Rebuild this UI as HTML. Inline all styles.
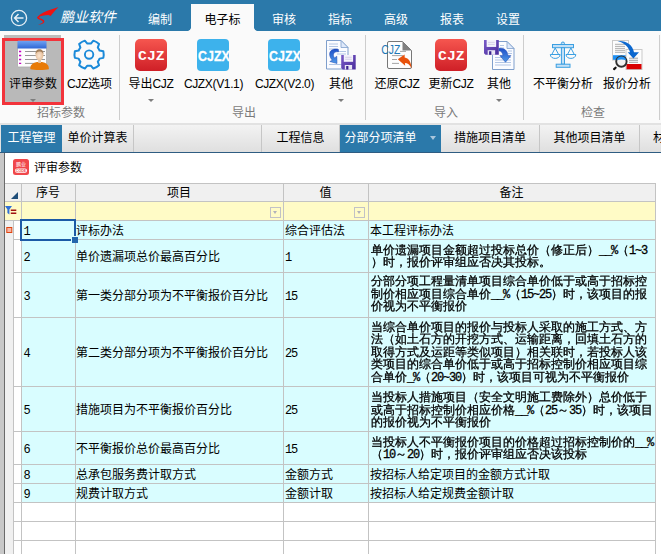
<!DOCTYPE html>
<html lang="zh-CN">
<head>
<meta charset="utf-8">
<title>评审参数</title>
<style>
html,body{margin:0;padding:0;}
body{width:661px;height:554px;overflow:hidden;position:relative;background:#fff;
 font-family:"Liberation Sans","Noto Sans CJK SC",sans-serif;font-size:12px;color:#000;}
.abs{position:absolute;}
#title{left:0;top:0;width:661px;height:31px;background:#2b79aa;}
.mt{position:absolute;top:10.5px;height:18px;line-height:18px;color:#fff;font-size:12px;white-space:nowrap;transform:translateX(-50%);}
#acttab{left:191px;top:4px;width:63px;height:28px;background:#fafafa;}
#acttab span{position:absolute;left:0;width:63px;top:6.5px;height:18px;line-height:18px;text-align:center;color:#000;font-size:12px;}
#brand{left:60px;top:7px;height:20px;line-height:20px;color:#fff;font-size:14px;font-style:italic;white-space:nowrap;letter-spacing:0px;}
#ribbon{left:0;top:31px;width:661px;height:92px;background:#fafafa;}
.sep{position:absolute;top:35px;width:1px;height:85px;background:#cdcdcd;}
.bl{position:absolute;top:74.5px;height:18px;line-height:18px;font-size:12px;white-space:nowrap;transform:translateX(-50%);color:#000;}
.la{letter-spacing:-0.35px;}
.gl{position:absolute;top:104px;height:18px;line-height:18px;font-size:12px;white-space:nowrap;transform:translateX(-50%);color:#7a7a7a;}
.dd{position:absolute;top:98.8px;width:0;height:0;border-left:3.2px solid transparent;border-right:3.2px solid transparent;border-top:3.6px solid #7d7d7d;transform:translateX(-50%);}
.ic{position:absolute;top:39px;width:32px;height:32px;}
#tabbar{left:0;top:123px;width:661px;height:30px;background:#e2e2e2;}
.tab{position:absolute;top:125px;height:27px;line-height:27px;font-size:12px;text-align:center;white-space:nowrap;color:#000;background:linear-gradient(#f3f3f3,#dfdfdf);box-sizing:border-box;border-right:1px solid #c6c6c6;}
.tab.on{background:#2b79aa;color:#fff;border-right:none;}
#panel{left:5px;top:153px;width:656px;height:401px;background:#fff;}
.cell{position:absolute;box-sizing:border-box;white-space:nowrap;overflow:hidden;}
.hd{height:18px;line-height:17px;text-align:center;font-size:12px;white-space:nowrap;}
.c{height:16px;line-height:16px;font-size:12px;white-space:nowrap;}
.ss{font-family:"Liberation Sans","WenQuanYi Zen Hei",sans-serif;font-size:12px;line-height:12.4px;white-space:nowrap;-webkit-text-stroke:0.3px #000;}
.hw{font-family:"Liberation Mono","IPAGothic",monospace;font-size:12px;letter-spacing:-1.2px;}
.ln{height:12.4px;line-height:12.4px;white-space:nowrap;}
.ln span{line-height:0;}
</style>
</head>
<body>
<div id="title" class="abs"></div>
<svg class="abs" style="left:9px;top:8px" width="20" height="20" viewBox="0 0 20 20"><circle cx="10" cy="10" r="7.6" fill="none" stroke="#e8f0f6" stroke-width="1.3"/><path d="M14.5 10H6M9.5 6L5.6 10l3.9 4" fill="none" stroke="#e8f0f6" stroke-width="1.5"/></svg>
<svg class="abs" style="left:30px;top:0" width="34" height="31" viewBox="30 0 34 31"><path d="M58.500 7C54 8.500 48 10.300 44 12.300C41 13.800 38 15.800 37 17.600C37.200 19 39.500 19.800 41.500 20.400C43 20.900 43.300 21.600 42.500 22.500C41.500 23.500 39.500 24.200 37.800 24.500C40.500 24.600 43.300 23.600 44.200 22.200C45 20.800 43.500 19.600 41.500 18.800C40 18.300 38.800 17.800 39.300 17C40.500 15.800 44 15.200 48.500 14.900L50.700 15.900C52.500 13.800 55 10.500 58.500 7Z" fill="#ee1212"/></svg>
<div id="brand" class="abs">鹏业软件</div>
<div class="mt" style="left:160px">编制</div>
<div id="acttab" class="abs"><span>电子标</span></div>
<div class="mt" style="left:284px">审核</div>
<div class="mt" style="left:340px">指标</div>
<div class="mt" style="left:396px">高级</div>
<div class="mt" style="left:452px">报表</div>
<div class="mt" style="left:508px">设置</div>

<div id="ribbon" class="abs"></div>
<div class="abs" style="left:188px;top:28px;width:3px;height:3px;background:radial-gradient(circle at 0 0,#2b79aa 2.4px,#fafafa 3px)"></div>
<div class="abs" style="left:254px;top:28px;width:3px;height:3px;background:radial-gradient(circle at 100% 0,#2b79aa 2.4px,#fafafa 3px)"></div>
<div class="abs" style="left:4px;top:35px;width:57px;height:69px;background:#bcbcbc;"></div>
<div class="abs" style="left:2px;top:38px;width:62px;height:67px;background:#b9b9b9;border:3px solid #f2333b;box-sizing:border-box;"></div>
<div class="sep" style="left:119px"></div>
<div class="sep" style="left:365px"></div>
<div class="sep" style="left:523px"></div>
<div class="sep" style="left:659px"></div>

<div class="bl" style="left:33px">评审参数</div>
<div class="bl" style="left:89.5px"><span class="la">CJZ</span>选项</div>
<div class="bl" style="left:151px">导出<span class="la">CJZ</span></div>
<div class="bl" style="left:213.5px"><span class="la">CJZX(V1.1)</span></div>
<div class="bl" style="left:284.5px"><span class="la">CJZX(V2.0)</span></div>
<div class="bl" style="left:341px">其他</div>
<div class="bl" style="left:397px">还原<span class="la">CJZ</span></div>
<div class="bl" style="left:451px">更新<span class="la">CJZ</span></div>
<div class="bl" style="left:499px">其他</div>
<div class="bl" style="left:563px">不平衡分析</div>
<div class="bl" style="left:627px">报价分析</div>
<div class="dd" style="left:33px"></div>
<div class="dd" style="left:151px"></div>
<div class="dd" style="left:341px"></div>
<div class="dd" style="left:499px"></div>
<div class="gl" style="left:61px">招标参数</div>
<div class="gl" style="left:244px">导出</div>
<div class="gl" style="left:446px">导入</div>
<div class="gl" style="left:593px">检查</div>

<!-- ICONS -->
<div id="icons">
<svg class="abs" style="left:0;top:0" width="661" height="125" viewBox="0 0 661 125">
<defs><linearGradient id="gr" x1="0" y1="0" x2="0" y2="1"><stop offset="0" stop-color="#f6564f"/><stop offset="1" stop-color="#cf1f27"/></linearGradient><linearGradient id="gb" x1="0" y1="0" x2="0" y2="1"><stop offset="0" stop-color="#6ea2f2"/><stop offset="1" stop-color="#2f66d6"/></linearGradient><linearGradient id="gp" x1="0" y1="0" x2="1" y2="1"><stop offset="0" stop-color="#7a5cc8"/><stop offset="1" stop-color="#4a2c9c"/></linearGradient><linearGradient id="ga" x1="0" y1="0" x2="0" y2="1"><stop offset="0" stop-color="#1f4fc8"/><stop offset="1" stop-color="#4f9ae8"/></linearGradient><radialGradient id="gs" cx="0.45" cy="0.55" r="0.6"><stop offset="0" stop-color="#fbe6d2"/><stop offset="1" stop-color="#e2b890"/></radialGradient></defs>
<g><rect x="17.500" y="41" width="29" height="26" rx="1" fill="#fdfdfd" stroke="#a9a9a9" stroke-width="0.8"/><rect x="17.500" y="41" width="29" height="7.500" fill="url(#gb)"/><g stroke="#c400c4" stroke-width="1.300"><path d="M19 51.500h2.200M19 55.500h2.200M19 59.500h2.200M19 63.400h2.200"/></g><g stroke="#8a8a8a" stroke-width="0.900"><path d="M25 51.500h20M25 55.500h20M25 59.500h20M25 63.400h20"/></g><path d="M30.400 69.200c-.5-3.500 1.600-6.300 6.600-7.200h5c5 .9 7.200 3.700 6.800 7.200-3 1-15.400 1-18.400 0z" fill="#e87a06"/><rect x="38.200" y="58.500" width="2.800" height="4.500" fill="#e6c3a0"/><ellipse cx="39.500" cy="55.200" rx="3.900" ry="5.300" fill="url(#gs)"/><path d="M35.600 54.500c-.3-3.600 1.500-5.300 3.900-5.300s4.300 1.700 3.900 5.300c-.7-2-1.800-3-3.900-3s-3.200 1-3.900 3z" fill="#a5825e"/></g>
<path d="M99.56 50.59L103.33 51.32A14.6 14.6 0 0 1 103.33 57.88L99.56 58.61A11.2 11.2 0 0 1 97.80 61.65L99.06 65.28A14.6 14.6 0 0 1 93.37 68.56L90.85 65.66A11.2 11.2 0 0 1 87.35 65.66L84.83 68.56A14.6 14.6 0 0 1 79.14 65.28L80.40 61.65A11.2 11.2 0 0 1 78.64 58.61L74.87 57.88A14.6 14.6 0 0 1 74.87 51.32L78.64 50.59A11.2 11.2 0 0 1 80.40 47.55L79.14 43.92A14.6 14.6 0 0 1 84.83 40.64L87.35 43.54A11.2 11.2 0 0 1 90.85 43.54L93.37 40.64A14.6 14.6 0 0 1 99.06 43.92L97.80 47.55A11.2 11.2 0 0 1 99.56 50.59Z" fill="none" stroke="#1b8ad9" stroke-width="2" stroke-linejoin="round"/>
<circle cx="89.100" cy="54.600" r="4.200" fill="none" stroke="#1b8ad9" stroke-width="1.900"/>
<rect x="135" y="39" width="32" height="32" rx="5" fill="url(#gr)"/>
<text x="151.3" y="60.200" text-anchor="middle" font-family="Liberation Mono,monospace" font-weight="bold" font-size="12.800" textLength="26.500" lengthAdjust="spacingAndGlyphs" fill="#fff">CJZ</text>
<rect x="435" y="39" width="32" height="32" rx="5" fill="url(#gr)"/>
<text x="451.3" y="60.200" text-anchor="middle" font-family="Liberation Mono,monospace" font-weight="bold" font-size="12.800" textLength="26.500" lengthAdjust="spacingAndGlyphs" fill="#fff">CJZ</text>
<rect x="197" y="39" width="32" height="32" rx="4" fill="#3db2ec"/>
<text x="198" y="60.800" font-family="Liberation Sans,sans-serif" font-weight="bold" font-size="15.200" stroke="#fff" stroke-width="0.300" textLength="31.800" lengthAdjust="spacingAndGlyphs" fill="#fff">CJZX</text>
<rect x="268" y="39" width="32" height="32" rx="4" fill="#3db2ec"/>
<text x="269" y="60.800" font-family="Liberation Sans,sans-serif" font-weight="bold" font-size="15.200" stroke="#fff" stroke-width="0.300" textLength="31.800" lengthAdjust="spacingAndGlyphs" fill="#fff">CJZX</text>
<path d="M326.5 40.5h14.5l7 7v21.5h-21.5z" fill="#fbfcff" stroke="#7f9fcc" stroke-width="1"/><path d="M341.0 40.5v7h7z" fill="#dfe9fa" stroke="#7f9fcc" stroke-width="0.800" stroke-linejoin="round"/><path d="M329 44H338M329 46.5H338M329 49H338M337 51.5H346M337 54H346M329 64.5H346" stroke="#a9c0e2" stroke-width="0.900"/>
<path d="M338.500 49.500c-5-1.500-9.500 1-8.800 5.500.3 2.200 1.300 3.800 2.600 5.200l-2.500 1.300 7.200 2-.2-7.300-2.200 1.700c-1.300-1.600-1.600-3.300-.6-4.700.9-1.300 2.500-1.700 4.500-1.400z" fill="url(#ga)" stroke="#1c44b0" stroke-width="0.500"/>
<g transform="translate(341.2 55) scale(1.0)"><path d="M0 0h14.500v14.500h-13l-1.500-1.500z" fill="url(#gp)"/><rect x="2.600" y="0" width="9.300" height="6.800" fill="#f4f2fb"/><path d="M4 2.300h6.500M4 4.300h6.500" stroke="#c9c3e2" stroke-width="0.700"/><rect x="3.600" y="10" width="7.300" height="4.500" fill="#e9e6f5"/><rect x="5" y="11" width="2.200" height="3.500" fill="#3a2390"/></g>
<path d="M389 41.500h13.500l9 9v16.500a1.500 1.500 0 0 1-1.500 1.500h-21a1.500 1.500 0 0 1-1.500-1.500v-24a1.500 1.500 0 0 1 1.500-1.500z" fill="#fdfdfd" stroke="#777" stroke-width="1"/>
<path d="M402.500 41.500l9 9h-9z" fill="#808080"/>
<path d="M400 51.400h6M392 55.600h11M392 59.500h5M392 63.400h7" stroke="#9b9b9b" stroke-width="0.900"/>
<text x="381.300" y="54" font-family="Liberation Sans,sans-serif" font-size="12" textLength="19" lengthAdjust="spacingAndGlyphs" fill="#1f78b6">CJZ</text>
<path d="M397.800 59.200l6.800-4.600.1 2.800c4 .6 6.600 4.600 6.900 11.200-1.800-3.800-4-5.600-6.700-5.600l.3 2.700z" fill="#e8520c"/>
<path d="M492.5 41.5h14.5l7 7v21h-21.5z" fill="#fbfcff" stroke="#7f9fcc" stroke-width="1"/><path d="M507.0 41.5v7h7z" fill="#dfe9fa" stroke="#7f9fcc" stroke-width="0.800" stroke-linejoin="round"/><path d="M500 45.5H504M500 48H504M508 51H512M508 53.5H512M495 57.5H511M495 60H511M495 62.5H511M495 65H511" stroke="#a9c0e2" stroke-width="0.900"/>
<g transform="translate(484 40) scale(1.0206896551724138)"><path d="M0 0h14.500v14.500h-13l-1.500-1.500z" fill="url(#gp)"/><rect x="2.600" y="0" width="9.300" height="6.800" fill="#f4f2fb"/><path d="M4 2.300h6.500M4 4.300h6.500" stroke="#c9c3e2" stroke-width="0.700"/><rect x="3.600" y="10" width="7.300" height="4.500" fill="#e9e6f5"/><rect x="5" y="11" width="2.200" height="3.500" fill="#3a2390"/></g>
<path d="M499 48.300c5.500-.5 8.600 2.300 8.900 7.300h3l-5.400 6.600-5.600-6.600h3c-.2-2.700-1.500-4.300-3.900-4.800z" fill="url(#ga)" stroke="#1c44b0" stroke-width="0.500"/>
<g fill="#c3e0f6" stroke="#3a9fe2" stroke-width="1"><circle cx="562.900" cy="43.600" r="1.600"/><rect x="552.500" y="44.500" width="21" height="3.200"/><rect x="561.400" y="47.700" width="3.100" height="16.500"/><rect x="556.200" y="64.200" width="13.800" height="3.100"/></g>
<g fill="none" stroke="#3a9fe2" stroke-width="1"><path d="M555.200 48l-3.300 6.300M555.200 48l3.300 6.300M550.300 54.500h9.800c0 5.200-9.800 5.200-9.800 0z"/><path d="M570.900 48l-3.300 6.300M570.900 48l3.300 6.300M566 54.500h9.800c0 5.200-9.800 5.200-9.800 0z"/></g>
<rect x="612.500" y="40.500" width="16" height="19.500" fill="#fdfdfd" stroke="#c9c9c9" stroke-width="1"/>
<path d="M615 44.300h10M615 46.400h10M615 48.400h10M615 50.300h10M615 52.300h10" stroke="#9a9a9a" stroke-width="0.800"/>
<rect x="613" y="55.200" width="15" height="4.600" fill="#1e90f4"/>
<rect x="626" y="49.500" width="16" height="20" fill="#fdfdfd" stroke="#c9c9c9" stroke-width="1"/>
<path d="M629 58.200h9M629 60.300h9M629 62.300h9" stroke="#8a8a8a" stroke-width="0.800"/>
<rect x="626.500" y="64" width="15" height="5.200" fill="#d90000"/>
<path d="M617.500 41c8.500-.8 15 3.500 16.500 11.200h5l-5.600 6.400-5.700-6.400h2.400c-1.700-5.600-5.700-9.200-12.600-11.200z" fill="#0c68cf"/>
<circle cx="621.400" cy="61.600" r="5.200" fill="#f2f2f2" stroke="#303030" stroke-width="1.900"/>
<path d="M616.600 60.200a5 5 0 0 1 9.600 0c-3-1-6.600-1-9.600 0z" fill="#1e90f4"/>
<path d="M615.600 67.700l-1.500 1.400" stroke="#111" stroke-width="2.200" stroke-linecap="round"/>
</svg>
</div><!--/icons-->

<div id="tabbar" class="abs"></div>
<div class="tab on" style="left:1px;width:61px">工程管理</div>
<div class="tab" style="left:62px;width:72px">单价计算表</div>
<div class="tab" style="left:134px;width:128px"></div>
<div class="tab" style="left:262px;width:78px">工程信息</div>
<div class="tab on" style="left:340px;width:101px;text-align:left;padding-left:4.5px">分部分项清单</div>
<div class="abs" style="left:429.5px;top:136px;width:0;height:0;border-left:3.5px solid transparent;border-right:3.5px solid transparent;border-top:4px solid #a9c6dc;"></div>
<div class="tab" style="left:441px;width:99px">措施项目清单</div>
<div class="tab" style="left:540px;width:100px">其他项目清单</div>
<div class="tab" style="left:640px;width:40px;text-align:left;padding-left:13px">材料</div>

<div class="abs" style="left:0;top:152px;width:661px;height:1px;background:#2e5c82"></div>
<div id="panel" class="abs"></div>
<svg class="abs" style="left:12px;top:158px" width="18" height="18" viewBox="0 0 18 18"><rect x="1" y="1" width="16" height="16" rx="2.500" fill="#f0474b"/><rect x="3" y="10.500" width="12" height="4.200" rx="2" fill="#fff"/><text x="9" y="8" text-anchor="middle" font-family="Liberation Sans,Noto Sans CJK SC,sans-serif" font-size="5" fill="#fff">鹏业</text><text x="9" y="14" text-anchor="middle" font-family="Liberation Sans,sans-serif" font-weight="bold" font-size="3.600" fill="#f0474b">CODE</text></svg>
<div class="abs" style="left:34px;top:159px;height:18px;line-height:18px;font-size:12px">评审参数</div>

<div id="grid">
<div class="abs" style="left:0;top:153px;width:5px;height:401px;background:#c8c8c8"></div>
<div class="abs" style="left:4px;top:153px;width:1px;height:401px;background:#6a6a6a"></div>
<div class="abs" style="left:5px;top:183px;width:650px;height:18px;background:#f0f0f0"></div>
<div class="abs" style="left:5px;top:202px;width:650px;height:18px;background:#fffbc6"></div>
<div class="abs" style="left:5px;top:220px;width:8px;height:334px;background:#f0f0f0"></div>
<div class="abs" style="left:21px;top:221px;width:634px;height:281px;background:#d9fdff"></div>
<div class="abs" style="left:5px;top:183px;width:651px;height:1px;background:#c3c3c3"></div>
<div class="abs" style="left:5px;top:201px;width:651px;height:1px;background:#c3c3c3"></div>
<div class="abs" style="left:5px;top:220px;width:651px;height:1px;background:#c3c3c3"></div>
<div class="abs" style="left:13px;top:239px;width:643px;height:1px;background:#c3c3c3"></div>
<div class="abs" style="left:13px;top:272px;width:643px;height:1px;background:#c3c3c3"></div>
<div class="abs" style="left:13px;top:317px;width:643px;height:1px;background:#c3c3c3"></div>
<div class="abs" style="left:13px;top:386px;width:643px;height:1px;background:#c3c3c3"></div>
<div class="abs" style="left:13px;top:431px;width:643px;height:1px;background:#c3c3c3"></div>
<div class="abs" style="left:13px;top:464px;width:643px;height:1px;background:#c3c3c3"></div>
<div class="abs" style="left:13px;top:483px;width:643px;height:1px;background:#c3c3c3"></div>
<div class="abs" style="left:13px;top:502px;width:643px;height:1px;background:#c3c3c3"></div>
<div class="abs" style="left:13px;top:521px;width:643px;height:1px;background:#c3c3c3"></div>
<div class="abs" style="left:13px;top:540px;width:643px;height:1px;background:#c3c3c3"></div>
<div class="abs" style="left:13px;top:220px;width:1px;height:334px;background:#c3c3c3"></div>
<div class="abs" style="left:21px;top:183px;width:1px;height:371px;background:#c3c3c3"></div>
<div class="abs" style="left:75px;top:183px;width:1px;height:371px;background:#c3c3c3"></div>
<div class="abs" style="left:283px;top:183px;width:1px;height:371px;background:#c3c3c3"></div>
<div class="abs" style="left:368px;top:183px;width:1px;height:371px;background:#c3c3c3"></div>
<div class="abs" style="left:655px;top:183px;width:1px;height:371px;background:#c3c3c3"></div>
<div class="abs hd" style="left:21px;top:185px;width:54px">序号</div>
<div class="abs hd" style="left:75px;top:185px;width:208px">项目</div>
<div class="abs hd" style="left:283px;top:185px;width:85px">值</div>
<div class="abs hd" style="left:368px;top:185px;width:287px">备注</div>
<div class="abs c hw" style="left:23.5px;top:223.5px">1</div>
<div class="abs c" style="left:76px;top:223.0px">评标办法</div>
<div class="abs c" style="left:285px;top:223.0px">综合评估法</div>
<div class="abs c" style="left:370px;top:223.0px">本工程评标办法</div>
<div class="abs c hw" style="left:23.5px;top:249.5px">2</div>
<div class="abs c" style="left:76px;top:249.0px">单价遗漏项总价最高百分比</div>
<div class="abs c hw" style="left:285px;top:249.5px">1</div>
<div class="abs ss" style="left:371px;top:243.6px"><div class="ln">单价遗漏项目金额超过投标总价（修正后）<span class="hw">__%</span>（<span class="hw">1~3</span></div><div class="ln">）时，报价评审组应否决其投标。</div></div>
<div class="abs c hw" style="left:23.5px;top:288.5px">3</div>
<div class="abs c" style="left:76px;top:288.0px">第一类分部分项为不平衡报价百分比</div>
<div class="abs c hw" style="left:285px;top:288.5px">15</div>
<div class="abs ss" style="left:371px;top:275.4px"><div class="ln">分部分项工程量清单项目综合单价低于或高于招标控</div><div class="ln">制价相应项目综合单价<span class="hw">__%</span>（<span class="hw">15~25</span>）时，该项目的报</div><div class="ln">价视为不平衡报价</div></div>
<div class="abs c hw" style="left:23.5px;top:345.5px">4</div>
<div class="abs c" style="left:76px;top:345.0px">第二类分部分项为不平衡报价百分比</div>
<div class="abs c hw" style="left:285px;top:345.5px">25</div>
<div class="abs ss" style="left:371px;top:321.0px"><div class="ln">当综合单价项目的报价与投标人采取的施工方式、方</div><div class="ln">法（如土石方的开挖方式、运输距离，回填土石方的</div><div class="ln">取得方式及运距等类似项目）相关联时，若投标人该</div><div class="ln">类项目的综合单价低于或高于招标控制价相应项目综</div><div class="ln">合单价<span class="hw">_%</span>（<span class="hw">20~30</span>）时，该项目可视为不平衡报价</div></div>
<div class="abs c hw" style="left:23.5px;top:402.5px">5</div>
<div class="abs c" style="left:76px;top:402.0px">措施项目为不平衡报价百分比</div>
<div class="abs c hw" style="left:285px;top:402.5px">25</div>
<div class="abs ss" style="left:371px;top:391.2px"><div class="ln">当投标人措施项目（安全文明施工费除外）总价低于</div><div class="ln">或高于招标控制价相应价格<span class="hw">__%</span>（<span class="hw">25</span>～<span class="hw">35</span>）时，该项目</div><div class="ln">的报价视为不平衡报价</div></div>
<div class="abs c hw" style="left:23.5px;top:441.5px">6</div>
<div class="abs c" style="left:76px;top:441.0px">不平衡报价总价最高百分比</div>
<div class="abs c hw" style="left:285px;top:441.5px">15</div>
<div class="abs ss" style="left:371px;top:435.6px"><div class="ln">当投标人不平衡报价项目的价格超过招标控制价的<span class="hw">__%</span></div><div class="ln">（<span class="hw">10</span>～<span class="hw">20</span>）时，报价评审组应否决该投标</div></div>
<div class="abs c hw" style="left:23.5px;top:467.5px">8</div>
<div class="abs c" style="left:76px;top:467.0px">总承包服务费计取方式</div>
<div class="abs c" style="left:285px;top:467.0px">金额方式</div>
<div class="abs c" style="left:370px;top:467.0px">按招标人给定项目的金额方式计取</div>
<div class="abs c hw" style="left:23.5px;top:486.5px">9</div>
<div class="abs c" style="left:76px;top:486.0px">规费计取方式</div>
<div class="abs c" style="left:285px;top:486.0px">金额计取</div>
<div class="abs c" style="left:370px;top:486.0px">按招标人给定规费金额计取</div>
<svg class="abs" style="left:5px;top:183px" width="17" height="60" viewBox="5 183 17 60"><path d="M18 192v7h-7z" fill="#1f4e79"/><path d="M5 206h7l-2.600 3.500v5l-2-1.500v-3.500z" fill="#2f6fd6"/><path d="M10.800 210.200h5.500M10.800 213.200h5.500" stroke="#a01212" stroke-width="1.400"/><rect x="6.800" y="227.500" width="5" height="5" fill="#f7b5a5" stroke="#e0440e" stroke-width="1"/></svg>
<div class="abs" style="left:20px;top:219px;width:56px;height:22px;border:2px solid #1c5aa6;box-sizing:border-box"></div>
<div class="abs" style="left:71px;top:236px;width:6px;height:6px;background:#2466ac;border:1px solid #d9fdff;border-right:none;border-bottom:none;box-sizing:content-box"></div>
<div class="abs" style="left:270px;top:207px;width:11px;height:11px;border:1px solid #c2c2c6;box-sizing:border-box;background:#fffbc6"></div>
<div class="abs" style="left:273px;top:211px;width:0;height:0;border-left:2.7px solid transparent;border-right:2.7px solid transparent;border-top:3.2px solid #b2b2ba"></div>
<div class="abs" style="left:354px;top:207px;width:11px;height:11px;border:1px solid #c2c2c6;box-sizing:border-box;background:#fffbc6"></div>
<div class="abs" style="left:357px;top:211px;width:0;height:0;border-left:2.7px solid transparent;border-right:2.7px solid transparent;border-top:3.2px solid #b2b2ba"></div>
</div><!--/grid-->
</body>
</html>
